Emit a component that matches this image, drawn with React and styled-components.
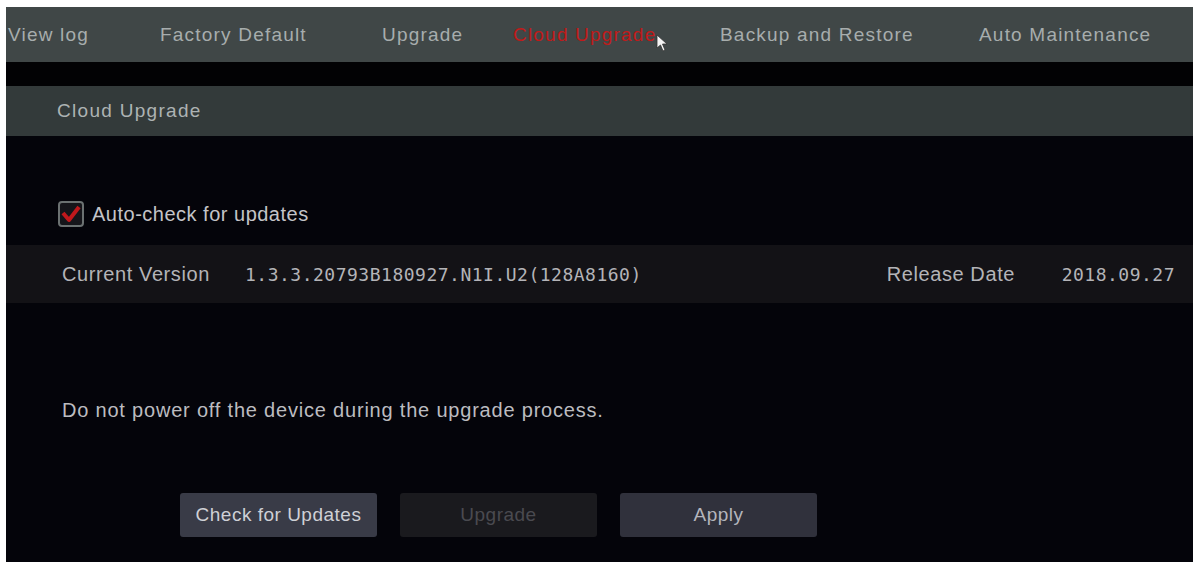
import styled, { createGlobalStyle } from "styled-components";

const Global = createGlobalStyle`
  html, body {
    margin:0;
    padding:0;
    background:#ffffff;
  }
  body {
    font-family:"Liberation Sans", Arial, sans-serif;
  }
`;

const Frame = styled.div`
  position:relative;
  display:flex;
  flex-direction:column;
  margin:7px 3px 0 6px;
  height:555px;
  background:#04040a;
  overflow:hidden;
`;

const TabBar = styled.div`
  display:flex;
  flex-direction:row;
  align-items:center;
  height:55px;
  background:#404747;
  padding-left:2px;
`;

const Tab = styled.span`
  width:${(p) => p.$w}px;
  flex-shrink:0;
  font-size:19px;
  letter-spacing:1.2px;
  white-space:nowrap;
  color:${(p) => (p.$active ? "#c01a1a" : "#a7adad")};
`;

const Strip = styled.div`
  height:24px;
  background:#020204;
`;

const SectionHeader = styled.div`
  display:flex;
  align-items:center;
  height:50px;
  padding-left:51px;
  background:#333a3a;
  color:#adb3b3;
  font-size:19px;
  letter-spacing:1.3px;
`;

const CheckRow = styled.div`
  display:flex;
  flex-direction:row;
  align-items:center;
  gap:8px;
  margin-top:64px;
  padding-left:52px;
  height:28px;
`;

const Box = styled.span`
  display:flex;
  align-items:center;
  justify-content:center;
  width:22px;
  height:22px;
  border:2px solid #6b7171;
  border-radius:4px;
  background:#15151a;
`;

const CheckLabel = styled.span`
  font-size:20px;
  letter-spacing:0.5px;
  color:#c4c4c8;
`;

const VersionRow = styled.div`
  display:flex;
  flex-direction:row;
  align-items:center;
  margin-top:17px;
  height:58px;
  padding-left:56px;
  background:#131216;
  color:#b4b4b8;
`;

const Label = styled.span`
  width:${(p) => p.$w}px;
  flex-shrink:0;
  font-size:20px;
  letter-spacing:0.6px;
`;

const Mono = styled.span`
  font-family:"DejaVu Sans Mono", "Liberation Mono", monospace;
  font-size:18px;
  letter-spacing:0.5px;
  flex:${(p) => (p.$grow ? 1 : "none")};
`;

const Notice = styled.div`
  margin-top:95px;
  padding-left:56px;
  height:24px;
  line-height:24px;
  font-size:20px;
  letter-spacing:0.8px;
  color:#bcbcc0;
`;

const ButtonRow = styled.div`
  display:flex;
  flex-direction:row;
  gap:23px;
  margin-top:71px;
  padding-left:174px;
`;

const Button = styled.button`
  width:197px;
  height:44px;
  border:none;
  border-radius:3px;
  font-family:"Liberation Sans", Arial, sans-serif;
  font-size:19px;
  letter-spacing:0.5px;
  background:${(p) => (p.$disabled ? "#1a1a1e" : p.$bright ? "#393b47" : "#30313c")};
  color:${(p) => (p.$disabled ? "#4a4a50" : p.$bright ? "#cfd0d6" : "#b4b5bc")};
`;

const Cursor = styled.svg`
  position:absolute;
  left:650px;
  top:27px;
`;

const tabs = [
  { t: "View log", w: 152 },
  { t: "Factory Default", w: 222 },
  { t: "Upgrade", w: 131 },
  { t: "Cloud Upgrade", w: 207, active: true },
  { t: "Backup and Restore", w: 259 },
  { t: "Auto Maintenance", w: 220 },
];

export default function App() {
  return (
    <>
      <Global />
      <Frame>
        <TabBar>
          {tabs.map((tab) => (
            <Tab key={tab.t} $w={tab.w} $active={tab.active}>
              {tab.t}
            </Tab>
          ))}
        </TabBar>
        <Strip />
        <SectionHeader>Cloud Upgrade</SectionHeader>
        <CheckRow>
          <Box>
            <svg width="20" height="18" viewBox="0 0 20 18">
              <path d="M2 8 L8 15 L18 2" fill="none" stroke="#c0181c" strokeWidth="4" strokeLinejoin="round" />
            </svg>
          </Box>
          <CheckLabel>Auto-check for updates</CheckLabel>
        </CheckRow>
        <VersionRow>
          <Label $w={183}>Current Version</Label>
          <Mono $grow>1.3.3.20793B180927.N1I.U2(128A8160)</Mono>
          <Label $w={175}>Release Date</Label>
          <Mono>2018.09.27</Mono>
          <Label $w={18} />
        </VersionRow>
        <Notice>Do not power off the device during the upgrade process.</Notice>
        <ButtonRow>
          <Button $bright>Check for Updates</Button>
          <Button $disabled>Upgrade</Button>
          <Button>Apply</Button>
        </ButtonRow>
        <Cursor width="14" height="18" viewBox="0 0 14 18">
          <path d="M1 1 L1 14 L4.5 11 L7 17 L9 16 L6.5 10 L11 10 Z" fill="#f4f4f4" stroke="#333" strokeWidth="0.8" />
        </Cursor>
      </Frame>
    </>
  );
}
